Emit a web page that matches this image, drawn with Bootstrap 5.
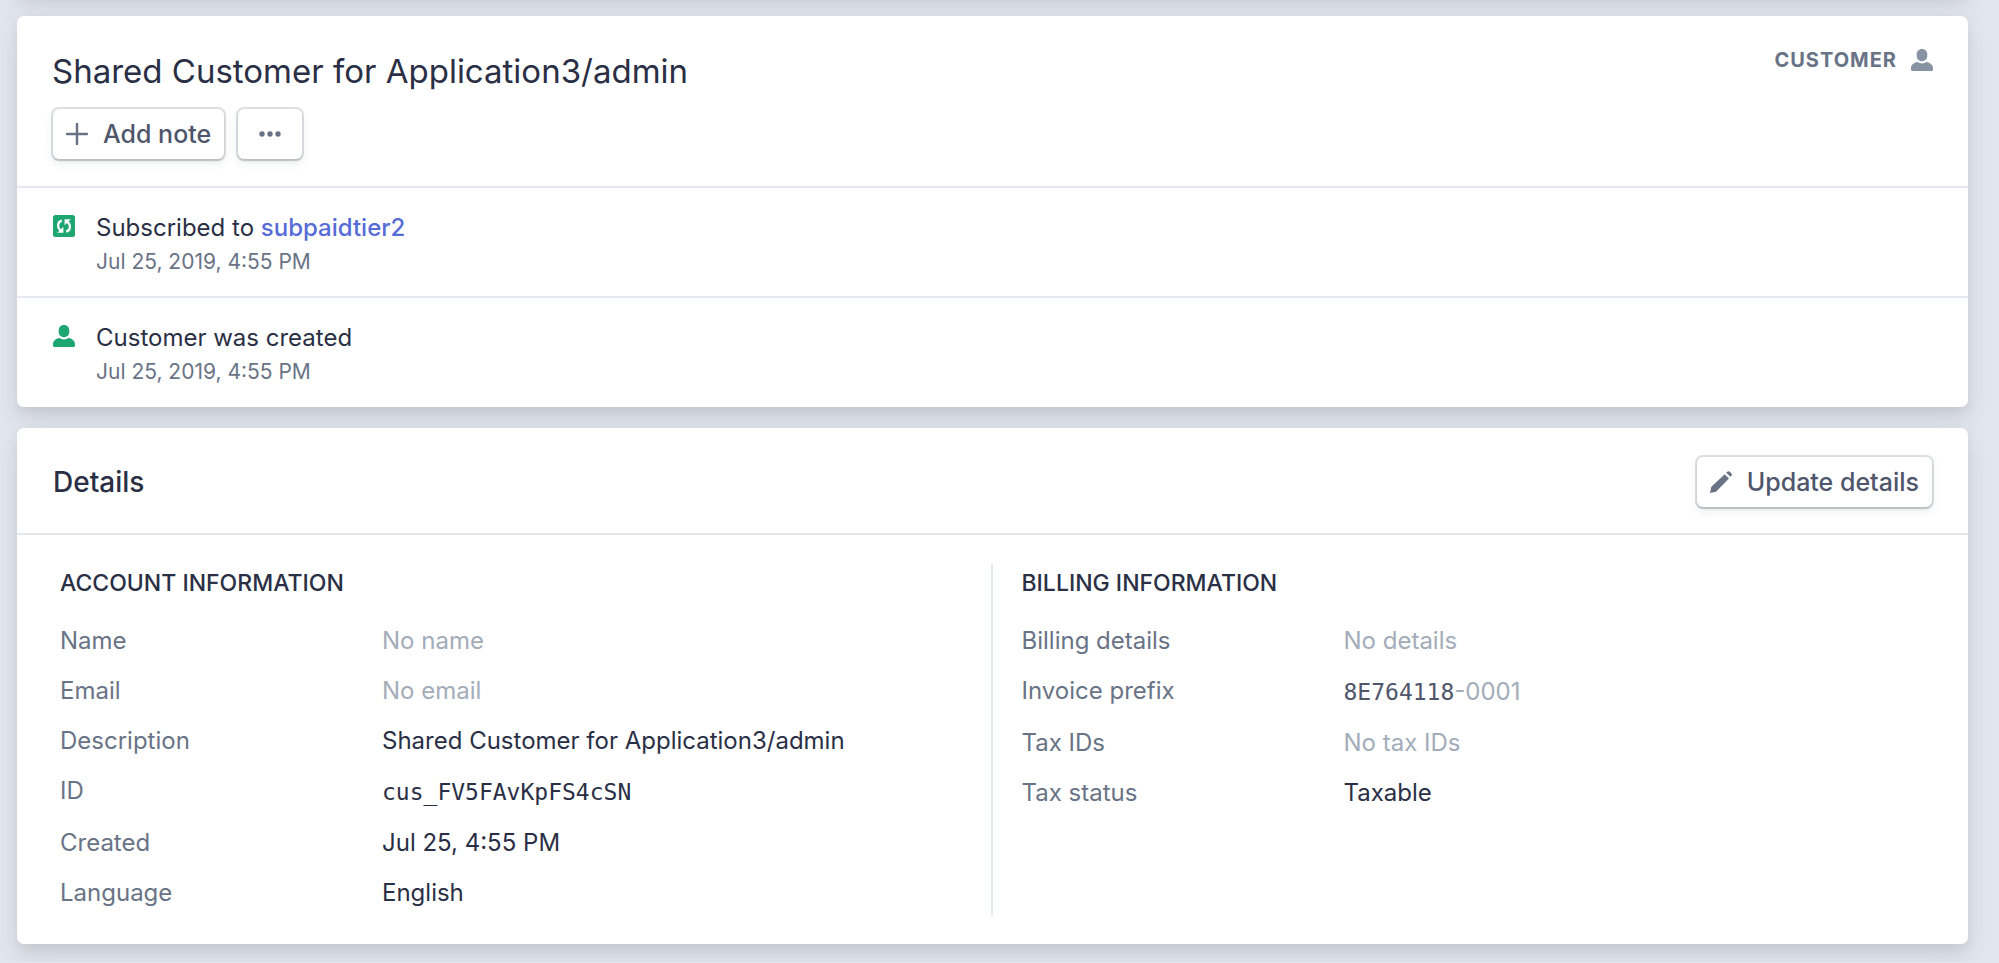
<!DOCTYPE html>
<html lang="en">
<head>
<meta charset="utf-8">
<meta name="viewport" content="width=device-width, initial-scale=1">
<title>Customer</title>
<link href="https://cdn.jsdelivr.net/npm/bootstrap@5.3.0/dist/css/bootstrap.min.css" rel="stylesheet">
<style>
  body { background: #e2e6ee; color: #2a2f45; font-family: Inter, "Liberation Sans", sans-serif; font-size: 24px; line-height: 30px; overflow-x: hidden; }
  .page { padding: 0 31px 18px 17px; gap: 21px; }
  .panel { border: 0; border-radius: 7px; color: inherit; box-shadow: 0 14px 28px rgba(60,66,87,.1), 0 6px 12px rgba(0,0,0,.07); }
  .panel-stub { height: 20px; margin-top: -25px; }
  .panel-top { padding: 28px 35px 25px 34px; border-bottom: 2px solid #e6e9f1; }
  .title { font-size: 33px; line-height: 54px; font-weight: 400; margin: 0 0 9px; padding-left: 1px; }
  .kind { color: #697386; font-size: 20px; line-height: 32px; font-weight: 700; letter-spacing: 1px; gap: 14px; }
  .tools { gap: 8px; }
  .tool { display: inline-flex; align-items: center; gap: 15px; min-height: 50px; padding: 0 13px; margin: 2px; border: 0; border-radius: 6px; background: #fff; color: #4f566b; font-size: 25px; line-height: 30px; font-weight: 500;
    box-shadow: 0 0 0 2px rgba(60,66,87,.16), 0 2px 2px rgba(0,0,0,.12), 0 4px 10px rgba(60,66,87,.1); }
  .tool svg { color: #6a7386; }
  .tools .tool + .tool { margin-left: 4px; padding: 0 21px; }
  .event { padding: 25px 36px 21px; gap: 21px; }
  .event:last-child { padding-bottom: 22px; }
  .event + .event { border-top: 2px solid #e6e9f1; }
  .event time { display: block; font-size: 21px; line-height: 26px; margin-top: 6px; color: #697386; }
  .event a { color: #556cd6; font-weight: 500; text-decoration: none; }
  .event svg { margin-top: 2px; flex: none; color: #1ea672; }
  .details-top { padding: 27px 34px 24px 36px; border-bottom: 2px solid #e3e8ee; }
  .details-title { font-size: 28px; line-height: 36px; font-weight: 500; margin: 0; }
  .details-body { padding: 29px 0; }
  .facts { flex: 1; padding: 4px 30px 7px 29px; }
  .facts:first-child { flex: none; width: calc(50% - 2px); padding-left: 43px; }
  .facts + .facts { border-left: 2px solid #e3e8ee; }
  .facts h3 { font-size: 23px; line-height: 30px; font-weight: 500; margin: 0 0 28px; }
  .facts dl { display: grid; grid-template-columns: 322px 1fr; row-gap: 20px; margin: 0; }
  .facts dt { font-weight: 400; color: #697386; }
  .facts dd { margin: 0; }
  .empty { color: #a3acb9; }
  .code-value { font-family: "DejaVu Sans Mono", monospace; font-size: 23px; line-height: 32px; }
  .prefix { color: #4f566b; }
</style>
</head>
<body>
<svg class="d-none" aria-hidden="true">
  <symbol id="person" viewBox="0 0 22 22"><path fill="currentColor" d="M11 0c3.200 0 5.300 2.300 5.300 5.500v1.200c0 3.200-2.300 5.500-5.300 5.500S5.700 9.900 5.700 6.700V5.500C5.700 2.300 7.800 0 11 0zM1.200 22C.5 22 0 21.500 0 20.800v-1.500c0-3.200 2.600-5.600 6.400-6.200 1.500.9 3 1.300 4.600 1.300s3.100-.4 4.600-1.300c3.800.6 6.400 3 6.400 6.200v1.500c0 .7-.5 1.200-1.200 1.200z"/></symbol>
</svg>
<main class="page d-flex flex-column">
  <div class="panel panel-stub card"></div>

  <section class="panel card">
    <div class="panel-top d-flex justify-content-between align-items-start">
      <div>
        <h1 class="title">Shared Customer for Application3/admin</h1>
        <div class="tools d-flex">
          <button type="button" class="tool">
            <svg width="22" height="22" viewBox="0 0 22 22" aria-hidden="true"><path d="M11 1v20M1 11h20" stroke="currentColor" stroke-width="2.500" stroke-linecap="round"/></svg>
            Add note
          </button>
          <button type="button" class="tool" aria-label="More actions">
            <svg width="22" height="6" viewBox="0 0 22 6" fill="currentColor" aria-hidden="true"><circle cx="3" cy="3" r="2.700"/><circle cx="11" cy="3" r="2.700"/><circle cx="19" cy="3" r="2.700"/></svg>
          </button>
        </div>
      </div>
      <div class="kind d-flex align-items-center">CUSTOMER <svg width="22" height="22" color="#8792a2" aria-hidden="true"><use href="#person"/></svg></div>
    </div>
    <div class="event d-flex align-items-start">
      <svg width="22" height="22" viewBox="0 0 22 22" aria-hidden="true"><rect width="22" height="22" rx="2.500" fill="currentColor"/><path fill="none" stroke="#fff" stroke-width="2.200" d="M8.800 5.600C4.200 6.800 4 12.600 7.600 15.400M13.200 16.600c4.600-1.200 4.800-7 1.200-9.800"/><path fill="#fff" d="M4.200 17.700h6.200v-6zM17.800 4.300h-6.200v6z"/></svg>
      <div>Subscribed to <a href="#">subpaidtier2</a><time datetime="2019-07-25T16:55">Jul 25, 2019, 4:55 PM</time></div>
    </div>
    <div class="event d-flex align-items-start">
      <svg width="22" height="22" aria-hidden="true"><use href="#person"/></svg>
      <div>Customer was created<time datetime="2019-07-25T16:55">Jul 25, 2019, 4:55 PM</time></div>
    </div>
  </section>

  <section class="panel card">
    <div class="details-top d-flex justify-content-between align-items-center">
      <h2 class="details-title">Details</h2>
      <button type="button" class="tool">
        <svg width="22" height="22" viewBox="0 0 22 22" fill="currentColor" aria-hidden="true"><path d="M0 22l1.300-6.200L14.700 3.200l4.300 4.300L6 20.700zM16.200 1.800l1-1c.8-.8 1.800-.8 2.600 0L21.300 2.300c.8.8.8 1.800 0 2.600l-.9.9z"/></svg>
        Update details
      </button>
    </div>
    <div class="details-body d-flex">
      <div class="facts">
        <h3>ACCOUNT INFORMATION</h3>
        <dl>
          <dt>Name</dt><dd class="empty">No name</dd>
          <dt>Email</dt><dd class="empty">No email</dd>
          <dt>Description</dt><dd>Shared Customer for Application3/admin</dd>
          <dt>ID</dt><dd class="code-value">cus_FV5FAvKpFS4cSN</dd>
          <dt>Created</dt><dd>Jul 25, 4:55 PM</dd>
          <dt>Language</dt><dd>English</dd>
        </dl>
      </div>
      <div class="facts">
        <h3>BILLING INFORMATION</h3>
        <dl>
          <dt>Billing details</dt><dd class="empty">No details</dd>
          <dt>Invoice prefix</dt><dd class="d-flex align-items-center"><span class="code-value prefix">8E764118</span><span class="empty">-0001</span></dd>
          <dt>Tax IDs</dt><dd class="empty">No tax IDs</dd>
          <dt>Tax status</dt><dd>Taxable</dd>
        </dl>
      </div>
    </div>
  </section>
</main>
<script src="https://cdn.jsdelivr.net/npm/bootstrap@5.3.0/dist/js/bootstrap.bundle.min.js"></script>
</body>
</html>
